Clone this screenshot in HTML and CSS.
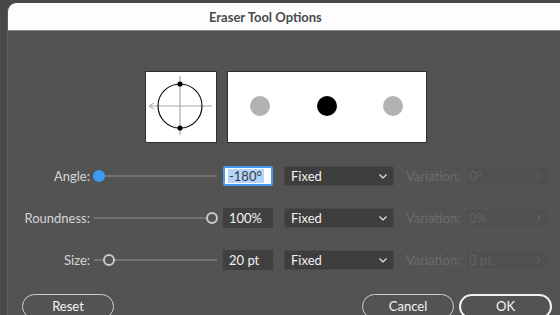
FILE: index.html
```html
<!DOCTYPE html>
<html>
<head>
<meta charset="utf-8">
<link rel="stylesheet" href="styles.css">
</head>
<body>
<div class="window">
  <div class="titlebar">Eraser Tool Options</div>
  <div class="content">
    <div class="preview">
      <div class="box box-small">
        <svg width="70" height="70" viewBox="0 0 70 70">
          <line x1="3" y1="34" x2="66" y2="34" stroke="#a8a8a8" stroke-width="1.2"/>
          <line x1="34" y1="4" x2="34" y2="63" stroke="#a8a8a8" stroke-width="1.2"/>
          <polyline points="8,31 3,34 8,37" fill="none" stroke="#a8a8a8" stroke-width="1"/>
          <circle cx="34" cy="34" r="22" fill="none" stroke="#111" stroke-width="1.2"/>
          <circle cx="34" cy="12" r="2.6" fill="#000"/>
          <circle cx="34" cy="56" r="2.6" fill="#000"/>
        </svg>
      </div>
      <div class="box box-wide">
        <svg width="198" height="70" viewBox="0 0 198 70">
          <circle cx="32" cy="34" r="10" fill="#b2b2b2"/>
          <circle cx="99" cy="34" r="10" fill="#000"/>
          <circle cx="165" cy="34" r="10" fill="#b2b2b2"/>
        </svg>
      </div>
    </div>

    <div class="rows">
      <div class="row">
        <span class="label">Angle:</span>
        <div class="slider"><div class="track"></div><div class="knob knob-blue" style="left:0px"></div></div>
        <div class="field field-focus"><span class="sel">-180°</span></div>
        <div class="select"><span>Fixed</span><svg class="chev" width="8" height="5" viewBox="0 0 8 5"><polyline points="0.5,0.5 4,4 7.5,0.5" fill="none" stroke="#e6e6e6" stroke-width="1.2"/></svg></div>
        <span class="var-label">Variation:</span>
        <div class="var-field"><span>0°</span><svg width="5" height="8" viewBox="0 0 5 8"><polyline points="0.5,0.5 4,4 0.5,7.5" fill="none" stroke="#666" stroke-width="1"/></svg></div>
      </div>
      <div class="row">
        <span class="label">Roundness:</span>
        <div class="slider"><div class="track"></div><div class="knob knob-ring" style="left:113px"></div></div>
        <div class="field"><span>100%</span></div>
        <div class="select"><span>Fixed</span><svg class="chev" width="8" height="5" viewBox="0 0 8 5"><polyline points="0.5,0.5 4,4 7.5,0.5" fill="none" stroke="#e6e6e6" stroke-width="1.2"/></svg></div>
        <span class="var-label">Variation:</span>
        <div class="var-field"><span>0%</span><svg width="5" height="8" viewBox="0 0 5 8"><polyline points="0.5,0.5 4,4 0.5,7.5" fill="none" stroke="#666" stroke-width="1"/></svg></div>
      </div>
      <div class="row">
        <span class="label">Size:</span>
        <div class="slider"><div class="track"></div><div class="knob knob-ring" style="left:10px"></div></div>
        <div class="field"><span>20 pt</span></div>
        <div class="select"><span>Fixed</span><svg class="chev" width="8" height="5" viewBox="0 0 8 5"><polyline points="0.5,0.5 4,4 7.5,0.5" fill="none" stroke="#e6e6e6" stroke-width="1.2"/></svg></div>
        <span class="var-label">Variation:</span>
        <div class="var-field"><span>0 pt</span><svg width="5" height="8" viewBox="0 0 5 8"><polyline points="0.5,0.5 4,4 0.5,7.5" fill="none" stroke="#666" stroke-width="1"/></svg></div>
      </div>
    </div>

    <div class="buttons">
      <button class="btn btn-reset">Reset</button>
      <div class="spacer"></div>
      <button class="btn btn-cancel">Cancel</button>
      <button class="btn btn-ok">OK</button>
    </div>
  </div>
</div>
</body>
</html>
```

FILE: styles.css
```css
html, body {
  margin: 0;
  padding: 0;
}
body {
  background: #484848;
  width: 560px;
  height: 315px;
  overflow: hidden;
  padding: 3px 0 0 7px;
  box-sizing: border-box;
  font-family: Lato, "Open Sans", sans-serif;
}
.window {
  width: 553px;
  height: 312px;
  border-left: 1px solid #5f5f5f;
  border-top-left-radius: 9px;
  overflow: hidden;
  background: #535353;
  box-sizing: border-box;
}
.titlebar {
  background: #fdfdfd;
  border-bottom: 1px solid #8a8a8a;
  box-sizing: border-box;
  height: 28px;
  display: flex;
  align-items: center;
  padding-left: 201px;
  font-weight: bold;
  font-size: 13px;
  color: #4a4a4a;
}
.content {
  padding-top: 40px;
}
.preview {
  display: flex;
  gap: 10px;
  margin-left: 137px;
}
.box {
  background: #fff;
  border: 1px solid #2f2f2f;
  height: 70px;
  display: flex;
}
.box-small { width: 70px; }
.box-wide { width: 198px; }

.rows {
  margin-top: 23px;
  display: flex;
  flex-direction: column;
  gap: 22px;
}
.row {
  display: flex;
  align-items: center;
  height: 20px;
  font-size: 13px;
}
.label {
  width: 82px;
  text-align: right;
  color: #d6d6d6;
  margin-right: 3px;
}
.slider {
  position: relative;
  width: 124px;
  height: 14px;
  margin-right: 6px;
}
.track {
  position: absolute;
  left: 1px;
  right: 0;
  top: 6px;
  height: 2px;
  background: #727272;
}
.knob {
  position: absolute;
  box-sizing: border-box;
}
.knob-blue {
  top: 1px;
  width: 12px;
  height: 12px;
  border-radius: 50%;
  background: #3d9bf5;
}
.knob-ring {
  top: 1px;
  width: 12px;
  height: 12px;
  border-radius: 50%;
  border: 2px solid #c9c9c9;
  background: #535353;
}
.field {
  width: 50px;
  height: 20px;
  box-sizing: border-box;
  background: #404040;
  color: #f2f2f2;
  display: flex;
  align-items: center;
  padding-left: 6px;
  margin-right: 11px;
  font-size: 13px;
}
.field-focus {
  background: #fff;
  border: 2px solid #4a98ef;
  border-radius: 2px;
  padding-left: 3px;
  color: #3a3a3a;
}
.sel {
  background: #b5d4fb;
  padding: 0 2px 0 1px;
  line-height: 14px;
}
.select {
  width: 110px;
  height: 20px;
  box-sizing: border-box;
  background: #3e3e3e;
  border: 1px solid #4a4a4a;
  border-radius: 2px;
  display: flex;
  align-items: center;
  justify-content: space-between;
  padding: 0 6px 0 6px;
  color: #f0f0f0;
  margin-right: 12px;
}
.chev { margin-top: 1px; }
.var-label {
  width: 59px;
  color: #6c6c6c;
}
.var-field {
  width: 84px;
  height: 20px;
  box-sizing: border-box;
  background: #505050;
  border: 1px solid #555;
  display: flex;
  align-items: center;
  justify-content: space-between;
  padding: 0 7px 0 3px;
  color: #626262;
}
.buttons {
  display: flex;
  margin-top: 24px;
  padding-left: 14px;
}
.spacer { flex: 1 0 0; max-width: 248px; }
.btn {
  font-family: Lato, "Open Sans", sans-serif;
  font-size: 13px;
  color: #f5f5f5;
  background: transparent;
  height: 25px;
  border-radius: 13px;
  box-sizing: border-box;
  padding: 0 0 1px 0;
}
.btn-reset {
  width: 92px;
  border: 1px solid #cfcfcf;
}
.btn-cancel {
  width: 92px;
  border: 1px solid #cfcfcf;
  margin-right: 5px;
}
.btn-ok {
  width: 93px;
  border: 2px solid #f2f2f2;
}
```
